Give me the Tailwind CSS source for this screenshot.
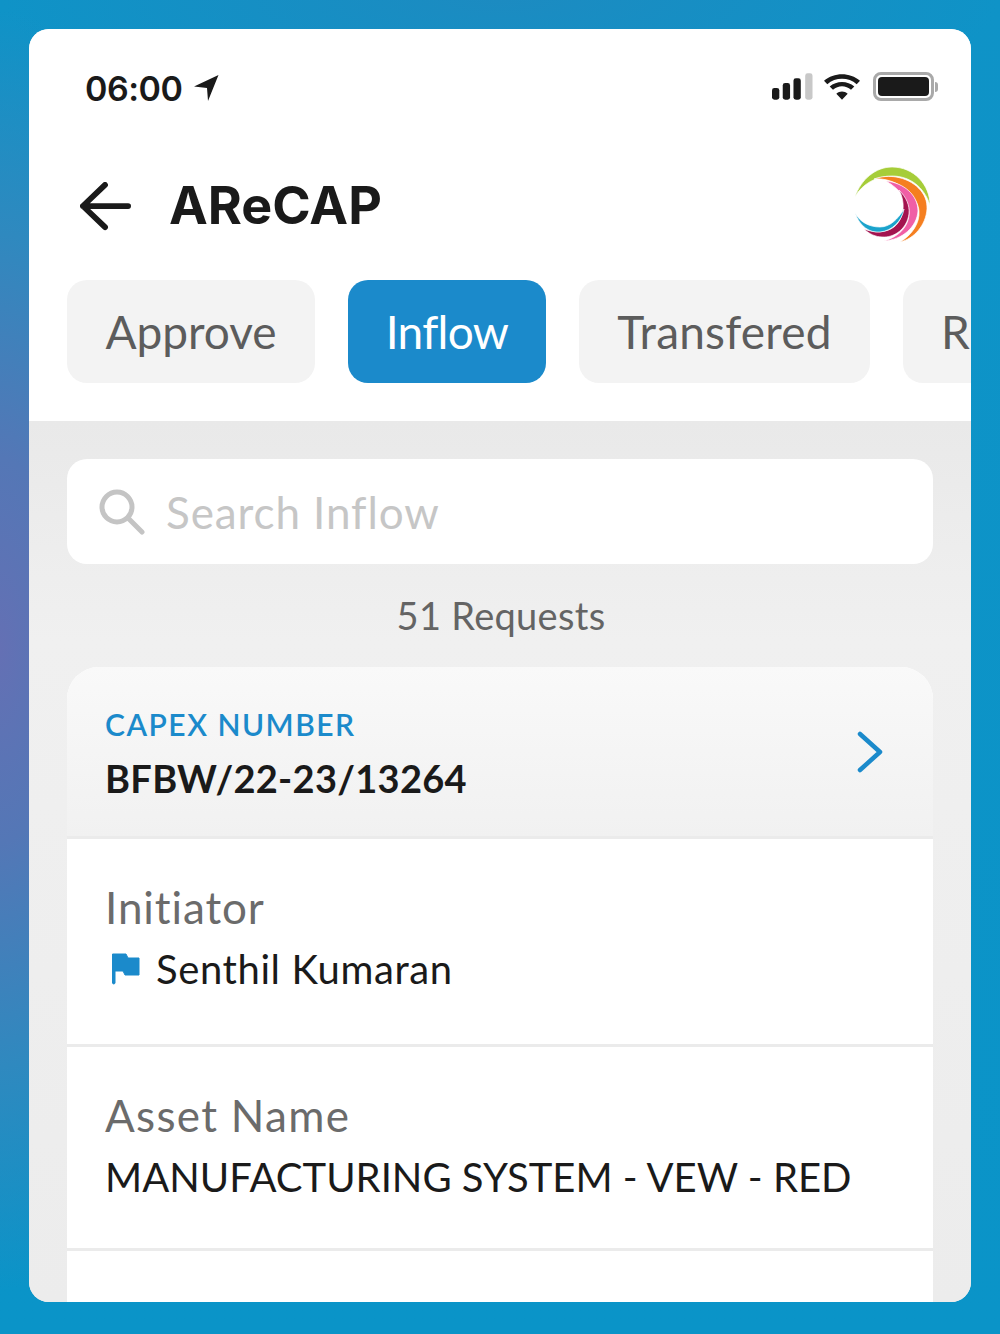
<!doctype html>
<html><head><meta charset="utf-8"><script src="https://cdn.jsdelivr.net/npm/@tailwindcss/browser@4"></script></head>
<body class="m-0">
<div class="w-[1000px] h-[1334px] p-[29px] pb-[32px] bg-[#0a93c6] bg-[radial-gradient(ellipse_220px_640px_at_0px_650px,#6470b4_0%,#5477b6_30%,#2f89bf_65%,transparent_100%),radial-gradient(ellipse_500px_120px_at_500px_0px,#1c8bc1_0%,transparent_100%),linear-gradient(180deg,#0f93c7_0%,#0a94c8_100%)] font-['Lato',sans-serif]">
<div class="h-full rounded-[20px] bg-[#eeeeee] overflow-hidden flex flex-col">
  <div class="bg-white h-[392px] shrink-0 flex flex-col">
    <div class="h-[102px] shrink-0 flex items-start justify-between pl-[56px] pr-[32px] pt-[40px]">
      <div class="flex items-center gap-[11px]">
        <span class="font-['Inter',sans-serif] font-semibold text-[34px] leading-[40px] tracking-[-0.5px] text-[#1a1a1a]">06:00</span>
        <svg width="26" height="28" viewBox="0 0 26 28" class="-mt-[3px]"><path d="M1 12.500 L25.500 1 L15 27 L14 14 Z" fill="#1a1a1a"/></svg>
      </div>
      <div class="flex items-center gap-[11px] pt-[3px] -translate-x-[1px]">
        <svg width="41" height="27" viewBox="0 0 42 27"><rect x="0" y="15" width="7.500" height="12" rx="2.500" fill="#1a1a1a"/><rect x="11" y="10" width="7.500" height="17" rx="2.500" fill="#1a1a1a"/><rect x="22" y="5" width="7.500" height="22" rx="2.500" fill="#1a1a1a"/><rect x="34" y="0" width="7.500" height="27" rx="2.500" fill="#c8c8c8"/></svg>
        <svg width="36" height="26" viewBox="0 0 38 27"><path d="M19 27 L13 20.500 C16.500 17.500 21.500 17.500 25 20.500 Z M9.500 16.500 L6 13 C13 6.500 25 6.500 32 13 L28.500 16.500 C23 11.500 15 11.500 9.500 16.500 Z M3.500 10.500 L0 7 C10.500 -2.300 27.500 -2.300 38 7 L34.500 10.500 C26 3 12 3 3.500 10.500 Z" fill="#1a1a1a"/></svg>
        <div class="flex items-center gap-[1px] ml-[2px]">
          <div class="w-[61px] h-[29px] rounded-[8px] border-[3px] border-[#a9a9a9] p-[2px]"><div class="w-full h-full rounded-[4px] bg-[#1a1a1a]"></div></div>
          <div class="w-[3px] h-[10px] bg-[#a9a9a9] rounded-r-[3px]"></div>
        </div>
      </div>
    </div>
    <div class="h-[149px] shrink-0 flex items-start pl-[51px] pr-[40px] pt-[36px]">
      <svg width="52" height="50" viewBox="0 0 54 52" class="mt-[15px]" fill="none" stroke="#1a1a1a" stroke-width="6" stroke-linecap="round" stroke-linejoin="round"><path d="M3 25 H50 M26 3 L3 25 L26 47"/></svg>
      <div class="ml-[37px] mt-[14px] font-['Inter',sans-serif] font-bold text-[52px] leading-[50px] tracking-[0px] text-[#1a1a1a]">AReCAP</div>
      <svg width="77" height="77" viewBox="0 0 77 77" class="ml-auto" stroke="#ffffff" stroke-width="0.700">
        <path d="M1 30 C7 12 22 0 38 0 C60 0 76 18 76 38 C70 20 56 9 38 9 C22 9 8 17 1 30 Z" fill="#a6cd39"/>
        <path d="M20 12 C28 9 36 9 42 10 C60 13 74 26 73 42 C72 58 60 72 46 75 C58 68 66 56 65 44 C64 28 42 10 20 12 Z" fill="#f57f20"/>
        <path d="M32 14 C50 16 64 28 64 44 C63 60 48 73 30 74 C44 70 55 60 55 46 C55 34 46 22 32 14 Z" fill="#f05fa6"/>
        <path d="M45 23 C52 30 56 38 55 47 C53 62 40 71 28 70 C22 70 15 67 10 62 C20 66 32 66 40 60 C50 52 52 36 45 23 Z" fill="#a3134f"/>
        <path d="M1 46 C6 60 16 66 26 65 C38 64 48 54 50 42 C44 52 36 60 26 60 C15 60 6 55 1 46 Z" fill="#1aa3cc"/>
      </svg>
    </div>
    <div class="flex gap-[33px] pl-[38px] overflow-hidden">
      <div class="w-[248px] h-[103px] shrink-0 rounded-[20px] bg-[#f3f3f3] flex items-center justify-center text-[46px] text-[#5c5c5c]">Approve</div>
      <div class="w-[198px] h-[103px] shrink-0 rounded-[20px] bg-[#1b8acb] flex items-center justify-center text-[46px] tracking-[-0.7px] text-white">Inflow</div>
      <div class="w-[291px] h-[103px] shrink-0 rounded-[20px] bg-[#f3f3f3] flex items-center justify-center text-[46px] tracking-[0.2px] text-[#5c5c5c]">Transfered</div>
      <div class="w-[68px] h-[103px] shrink-0 rounded-l-[20px] bg-[#f3f3f3] pl-[38px] flex items-center text-[46px] text-[#5c5c5c] overflow-hidden">R</div>
    </div>
  </div>
  <div class="flex-1 px-[38px] pt-[38px] bg-[linear-gradient(180deg,#e9e9e9_0%,#f0f0f0_25%,#ececec_100%)] flex flex-col min-h-0">
    <div class="h-[105px] shrink-0 rounded-[20px] bg-white flex items-center pl-[32px] gap-[21px]">
      <svg width="46" height="46" viewBox="0 0 46 46" fill="none" stroke="#c4c4c4" stroke-width="5" stroke-linecap="round"><circle cx="18" cy="18" r="15"/><path d="M29 29 L43 43"/></svg>
      <span class="text-[44px] text-[#c6c6c6] tracking-[0.9px]">Search Inflow</span>
    </div>
    <div class="h-[103px] shrink-0 flex items-center justify-center text-[38px] tracking-[0.3px] text-[#646464] pl-[2px]">51 Requests</div>
    <div class="flex-1 rounded-t-[32px] bg-white overflow-hidden flex flex-col min-h-0">
      <div class="h-[172px] shrink-0 bg-[linear-gradient(180deg,#f9f9f9,#f1f1f1)] border-b-[3px] border-[#ebebeb] pl-[38px] pr-[50px] flex items-center justify-between">
        <div class="mt-[7px]">
          <div class="text-[30px] leading-[40px] font-semibold tracking-[1.5px] text-[#1b8acb]">CAPEX NUMBER</div>
          <div class="mt-[6px] text-[38px] leading-[56px] font-bold tracking-[0.3px] text-[#1a1a1a]">BFBW/22-23/13264</div>
        </div>
        <svg width="26" height="42" viewBox="0 0 26 42" fill="none" stroke="#1b8acb" stroke-width="4.500" stroke-linecap="round" stroke-linejoin="round"><path d="M3 3 L23 21 L3 39"/></svg>
      </div>
      <div class="h-[208px] shrink-0 border-b-[3px] border-[#ebebeb] pl-[38px] pt-[40px]">
        <div class="text-[44px] leading-[56px] tracking-[0.9px] text-[#6b6b6b]">Initiator</div>
        <div class="flex items-center mt-[6px]">
          <svg width="30" height="32" viewBox="0 0 30 32" class="ml-[6px] mr-[15px]"><path d="M1.500 1 H15 L17 5 H28 V22 H14 L12 18 H4 V30 A1.300 1.300 0 0 1 1.500 30 Z" fill="#1b8acb" stroke="#1b8acb" stroke-linejoin="round"/></svg>
          <span class="text-[40px] leading-[56px] tracking-[0.6px] text-[#1a1a1a]">Senthil Kumaran</span>
        </div>
      </div>
      <div class="h-[204px] shrink-0 border-b-[3px] border-[#ebebeb] pl-[38px] pt-[40px]">
        <div class="text-[44px] leading-[56px] tracking-[1.3px] text-[#6b6b6b]">Asset Name</div>
        <div class="text-[40px] leading-[56px] mt-[6px] tracking-[0px] text-[#1a1a1a]">MANUFACTURING SYSTEM - VEW - RED</div>
      </div>
    </div>
  </div>
</div>
</div>
</body></html>
